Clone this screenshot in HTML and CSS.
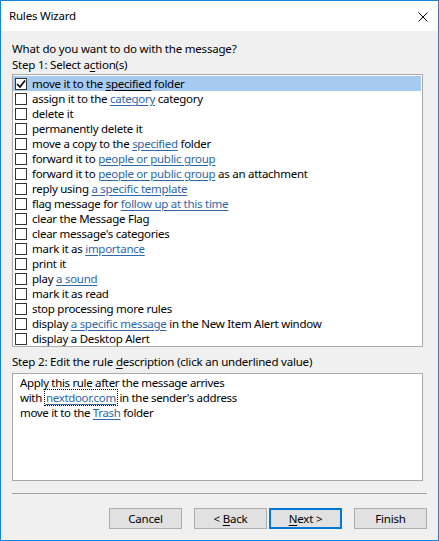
FILE: index.html
```html
<!DOCTYPE html>
<html>
<head>
<meta charset="utf-8">
<title>Rules Wizard</title>
<link rel="stylesheet" href="styles.css">
</head>
<body>
<div class="window">
  <div class="titlebar">
    <span class="title">Rules Wizard</span>
    <svg class="close" width="10" height="10" viewBox="0 0 10 10"><path d="M0.5 0.5L9.5 9.5M9.5 0.5L0.5 9.5" stroke="#000" stroke-width="1" fill="none"/></svg>
  </div>
  <div class="content">
    <div class="prompt">What do you want to do with the message?</div>
    <div class="prompt">Step 1: Select a<u>c</u>tion(s)</div>
    <div class="listbox">
      <div class="row selected"><span class="check"><svg width="10" height="10" viewBox="0 0 10 10"><path d="M1 5L4 8L9 1.5" stroke="#000" stroke-width="1.6" fill="none"/></svg></span><span class="label">move it to the <u>specified</u> folder</span></div>
      <div class="row"><span class="check"></span><span class="label">assign it to the <a>category</a> category</span></div>
      <div class="row"><span class="check"></span><span class="label">delete it</span></div>
      <div class="row"><span class="check"></span><span class="label">permanently delete it</span></div>
      <div class="row"><span class="check"></span><span class="label">move a copy to the <a>specified</a> folder</span></div>
      <div class="row"><span class="check"></span><span class="label">forward it to <a>people or public group</a></span></div>
      <div class="row"><span class="check"></span><span class="label">forward it to <a>people or public group</a> as an attachment</span></div>
      <div class="row"><span class="check"></span><span class="label">reply using <a>a specific template</a></span></div>
      <div class="row"><span class="check"></span><span class="label">flag message for <a>follow up at this time</a></span></div>
      <div class="row"><span class="check"></span><span class="label">clear the Message Flag</span></div>
      <div class="row"><span class="check"></span><span class="label">clear message's categories</span></div>
      <div class="row"><span class="check"></span><span class="label">mark it as <a>importance</a></span></div>
      <div class="row"><span class="check"></span><span class="label">print it</span></div>
      <div class="row"><span class="check"></span><span class="label">play <a>a sound</a></span></div>
      <div class="row"><span class="check"></span><span class="label">mark it as read</span></div>
      <div class="row"><span class="check"></span><span class="label">stop processing more rules</span></div>
      <div class="row"><span class="check"></span><span class="label">display <a>a specific message</a> in the New Item Alert window</span></div>
      <div class="row"><span class="check"></span><span class="label">display a Desktop Alert</span></div>
    </div>
    <div class="step2">Step 2: Edit the rule <u>d</u>escription (click an underlined value)</div>
    <div class="descbox">
      <div class="line">Apply this rule after the message arrives</div>
      <div class="line">with<a class="focus">nextdoor.com</a> in the sender's address</div>
      <div class="line">move it to the <a>Trash</a> folder</div>
    </div>
    <div class="separator"></div>
    <div class="buttons">
      <button class="btn">Cancel</button>
      <button class="btn">&lt; <u>B</u>ack</button>
      <button class="btn next default"><u>N</u>ext &gt;</button>
      <button class="btn">Finish</button>
    </div>
  </div>
</div>
</body>
</html>
```
FILE: styles.css
```css
html, body {
  margin: 0;
  padding: 0;
  background: #f0f0f0;
}
body {
  font-family: "Noto Sans", "Open Sans", sans-serif;
  font-size: 11.5px;
  letter-spacing: -0.2px;
  color: #000;
}
.window {
  width: 439px;
  height: 541px;
  box-sizing: border-box;
  border: 1px solid #1883d7;
  background: #f0f0f0;
  display: flex;
  flex-direction: column;
}
.titlebar {
  height: 30px;
  flex: none;
  background: #fff;
  display: flex;
  align-items: center;
  justify-content: space-between;
  padding: 0 10px 0 8px;
}
.title {
  line-height: 16px;
}
.close {
  display: block;
  margin-top: 1px;
}
.content {
  padding: 10px 11px 0 11px;
}
.prompt {
  line-height: 16px;
  white-space: nowrap;
}
u {
  text-decoration: underline;
  text-underline-offset: 2px;
}
a {
  color: #2e66a6;
  text-decoration: underline;
  text-underline-offset: 2px;
  cursor: pointer;
}
.listbox {
  margin: 1px 4px 0 0;
  height: 273px;
  box-sizing: border-box;
  border: 1px solid #a9a9a9;
  background: #fff;
  padding: 1px 1px 0 0;
  overflow: hidden;
}
.row {
  height: 15px;
  display: flex;
  align-items: center;
}
.row.selected {
  background: #a6caf0;
}
.label {
  white-space: nowrap;
  line-height: 15px;
  letter-spacing: -0.27px;
}
.check {
  width: 12px;
  height: 12px;
  box-sizing: border-box;
  border: 1px solid #333;
  background: #fff;
  margin: 0 5px 0 2px;
  flex: none;
  display: flex;
  align-items: center;
  justify-content: center;
}
.check svg {
  display: block;
}
.step2 {
  margin-top: 7px;
  line-height: 16px;
  white-space: nowrap;
}
.descbox {
  margin: 3px 4px 0 0;
  height: 108px;
  box-sizing: border-box;
  border: 1px solid #a9a9a9;
  background: #fff;
  padding: 1px 7px;
}
.line {
  line-height: 15px;
  white-space: nowrap;
  letter-spacing: -0.33px;
}
.focus {
  outline: 1px dotted #000;
  outline-offset: 0;
  padding: 0 1px;
  margin-left: 3px;
}
.separator {
  margin-top: 12px;
  border-top: 1px solid #a0a0a0;
}
.buttons {
  margin-top: 14px;
  display: flex;
  justify-content: flex-end;
}
.btn {
  width: 73px;
  height: 21px;
  box-sizing: border-box;
  border: 1px solid #adadad;
  background: #e1e1e1;
  font-family: inherit;
  font-size: 11.5px;
  letter-spacing: -0.2px;
  color: #000;
  padding: 0;
  margin: 0 0 0 12px;
  line-height: 17px;
}
.btn.next {
  margin-left: 2px;
}
.btn.default {
  border: 2px solid #0078d7;
}
```
